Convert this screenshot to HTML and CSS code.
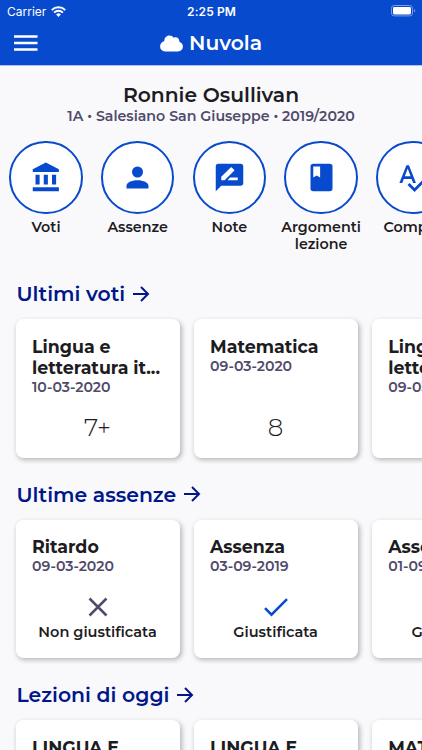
FILE: index.html
```html
<!DOCTYPE html>
<html lang="it">
<head>
    <meta charset="UTF-8">
    <meta name="viewport" content="width=device-width, initial-scale=1.0">
    <title>Nuvola</title>
    <link rel="stylesheet" href="styles.css">
</head>
<body>
    <header class="header">
        <div class="status-bar">
            <div class="carrier">
                <span class="carrier-name">Carrier</span>
                <svg class="wifi" viewBox="0 0 15 11"><path d="M.7 4.1a9.7 9.7 0 0 1 13.6 0M3.1 6.6a6.3 6.3 0 0 1 8.8 0" fill="none" stroke="#fff" stroke-width="2"/><path d="M7.5 11 5.1 8.5a3.5 3.5 0 0 1 4.8 0z" fill="#fff"/></svg>
            </div>
            <span class="time">2:25 PM</span>
            <svg class="battery" viewBox="0 0 25 12"><rect x=".5" y=".5" width="21" height="10.4" rx="2.8" fill="none" stroke="#7b9ce6"/><rect x="2" y="2" width="18" height="7.4" rx="1.4" fill="#fff"/><path d="M23 4v3.6q1.2-.5 1.2-1.8T23 4z" fill="#7b9ce6"/></svg>
        </div>
        <div class="toolbar">
            <svg class="menu-icon" viewBox="0 0 24 16"><path d="M0 1.5h23.5M0 8h23.5M0 14.5h23.5" stroke="#fff" stroke-width="2.3"/></svg>
            <div class="brand">
                <svg class="cloud" viewBox="0 0 23 17"><path d="M5 16.4a5 5 0 0 1-4.9-5C.1 8.5 1.9 6.6 4.2 6.2 4.5 2.7 6.5.5 9.2.5c2 0 3.5.9 4.4 2.3 2.7-1.3 5.7.3 5.7 3.2v.8c2.1.6 3.6 2.4 3.6 4.7 0 2.8-2.1 4.9-4.9 4.9z" fill="#fff"/></svg>
                <span class="brand-name">Nuvola</span>
            </div>
        </div>
    </header>

    <main class="content">
        <div class="student">
            <h1>Ronnie Osullivan</h1>
            <p>1A • Salesiano San Giuseppe • 2019/2020</p>
        </div>

        <nav class="shortcuts">
            <a class="shortcut">
                <span class="circle"><svg viewBox="0 0 24 24"><path d="M11.5 1 2 6v2h19V6M16 10v7h3v-7M2 22h19v-3H2M10 10v7h3v-7M4 10v7h3v-7H4z"/></svg></span>
                <span class="label">Voti</span>
            </a>
            <a class="shortcut">
                <span class="circle"><svg viewBox="0 0 24 24"><path d="M12 4a4 4 0 1 1 0 8 4 4 0 0 1 0-8m0 10c4.42 0 8 1.79 8 4v2H4v-2c0-2.21 3.58-4 8-4z"/></svg></span>
                <span class="label">Assenze</span>
            </a>
            <a class="shortcut">
                <span class="circle"><svg viewBox="0 0 24 24"><path fill-rule="evenodd" d="M20 2H4a2 2 0 0 0-2 2v18l4-4h14a2 2 0 0 0 2-2V4a2 2 0 0 0-2-2M6 14v-2.47l6.88-6.88c.2-.2.51-.2.71 0l1.77 1.77c.2.2.2.51 0 .71L8.47 14H6m12 0h-7.5l2-2H18v2z"/></svg></span>
                <span class="label">Note</span>
            </a>
            <a class="shortcut">
                <span class="circle"><svg viewBox="0 0 24 24"><path fill-rule="evenodd" d="M18 2H6a2 2 0 0 0-2 2v16a2 2 0 0 0 2 2h12a2 2 0 0 0 2-2V4a2 2 0 0 0-2-2M6 4h5v8l-2.5-1.5L6 12V4z"/></svg></span>
                <span class="label">Argomenti lezione</span>
            </a>
            <a class="shortcut">
                <span class="circle"><svg viewBox="0 0 24 24"><path fill-rule="evenodd" d="M21.59 11.59 13.5 19.68 9.83 16l-1.41 1.41 5.08 5.09L23 13M6.43 11 8.5 5.5l2.07 5.5m1.88 5h2.09L9.43 3H7.57L2.46 16h2.09l1.12-3h5.64l1.14 3z"/></svg></span>
                <span class="label">Compiti</span>
            </a>
        </nav>

        <section class="section">
            <h2><span>Ultimi voti</span> <svg class="arrow" viewBox="0 0 18 18"><path d="M1 9h15M9 2l7 7-7 7"/></svg></h2>
            <div class="cards">
                <article class="card">
                    <h3>Lingua e<br>letteratura it...</h3>
                    <time>10-03-2020</time>
                    <div class="grade">7+</div>
                </article>
                <article class="card">
                    <h3>Matematica</h3>
                    <time>09-03-2020</time>
                    <div class="grade">8</div>
                </article>
                <article class="card">
                    <h3>Lingua e<br>letteratura it...</h3>
                    <time>09-03-2020</time>
                    <div class="grade">7</div>
                </article>
            </div>
        </section>

        <section class="section">
            <h2><span>Ultime assenze</span> <svg class="arrow" viewBox="0 0 18 18"><path d="M1 9h15M9 2l7 7-7 7"/></svg></h2>
            <div class="cards">
                <article class="card">
                    <h3>Ritardo</h3>
                    <time>09-03-2020</time>
                    <div class="state">
                        <svg class="cross" viewBox="0 0 26 20"><path d="m4.5 1.5 17 17m0-17-17 17"/></svg>
                        <span>Non giustificata</span>
                    </div>
                </article>
                <article class="card">
                    <h3>Assenza</h3>
                    <time>03-09-2019</time>
                    <div class="state">
                        <svg class="check" viewBox="0 0 26 20"><path d="m2 11.2 6.5 6.5L24 2.2"/></svg>
                        <span>Giustificata</span>
                    </div>
                </article>
                <article class="card">
                    <h3>Assenza</h3>
                    <time>01-09-2019</time>
                    <div class="state">
                        <svg class="check" viewBox="0 0 26 20"><path d="m2 11.2 6.5 6.5L24 2.2"/></svg>
                        <span>Giustificata</span>
                    </div>
                </article>
            </div>
        </section>

        <section class="section">
            <h2><span>Lezioni di oggi</span> <svg class="arrow" viewBox="0 0 18 18"><path d="M1 9h15M9 2l7 7-7 7"/></svg></h2>
            <div class="cards">
                <article class="card"><h3>LINGUA E</h3></article>
                <article class="card"><h3>LINGUA E</h3></article>
                <article class="card"><h3>MATEMATICA</h3></article>
            </div>
        </section>
    </main>
</body>
</html>
```
FILE: styles.css
```css
:root {
    --primary: #084acd;
    --title: #001689;
    --text: #1d1c22;
    --muted: #504b6b;
    --background: #f9f9fc;
}

* {
    box-sizing: border-box;
}

body {
    margin: 0;
    height: 750px;
    overflow: hidden;
    background: var(--background);
    color: var(--text);
    font-family: Montserrat, Inter, sans-serif;
}

h1, h2, h3, p {
    margin: 0;
}

svg {
    display: block;
    flex: none;
}

.header {
    height: 66px;
    background: var(--primary);
    border-bottom: 1px solid #a9c3f5;
    color: #fff;
}

.status-bar {
    display: grid;
    grid-template-columns: 1fr auto 1fr;
    align-items: center;
    height: 22px;
    padding: 0 6px 0 7px;
    font-family: Inter, sans-serif;
    font-size: 12px;
}

.carrier {
    display: flex;
    align-items: center;
    gap: 5px;
}

.wifi {
    width: 15px;
    height: 11px;
}

.time {
    font-weight: 600;
    letter-spacing: 0.1px;
}

.battery {
    width: 25px;
    height: 12px;
    justify-self: end;
}

.toolbar {
    display: grid;
    grid-template-columns: 1fr auto 1fr;
    align-items: center;
    height: 42px;
    padding: 0 14px;
}

.menu-icon {
    width: 24px;
    height: 16px;
}

.brand {
    display: flex;
    align-items: center;
    gap: 6px;
}

.cloud {
    width: 23px;
    height: 17px;
}

.brand-name {
    padding-bottom: 2px;
    font-size: 20.3px;
    font-weight: 600;
}

.student {
    padding-top: 17px;
    text-align: center;
}

.student h1 {
    font-size: 20.3px;
    font-weight: 600;
    line-height: 24px;
}

.student p {
    color: var(--muted);
    font-size: 14.2px;
    font-weight: 600;
    line-height: 18px;
}

.shortcuts {
    display: flex;
    gap: 7.7px;
    height: 152px;
    padding: 15.5px 0 0 4px;
}

.shortcut {
    display: flex;
    flex: 0 0 84px;
    flex-direction: column;
    align-items: center;
}

.circle {
    display: flex;
    align-items: center;
    justify-content: center;
    width: 73.5px;
    height: 73.5px;
    border: 2px solid var(--primary);
    border-radius: 50%;
    background: #fff;
}

.circle svg {
    width: 33px;
    height: 33px;
    fill: var(--primary);
}

.label {
    margin-top: 4.5px;
    font-size: 14.3px;
    font-weight: 600;
    line-height: 17px;
    text-align: center;
}

.section {
    height: 200.5px;
    padding-left: 15.5px;
}

.section h2 {
    display: flex;
    align-items: center;
    gap: 7px;
    height: 33px;
    padding-left: 1px;
    color: var(--title);
    font-size: 20.4px;
    font-weight: 600;
}

.arrow {
    width: 18px;
    height: 18px;
    fill: none;
    stroke: var(--title);
    stroke-width: 2;
}

.cards {
    display: flex;
    gap: 13.6px;
    padding-top: 9px;
}

.card {
    display: flex;
    flex: 0 0 164.5px;
    flex-direction: column;
    height: 138.5px;
    padding: 16.5px 17px 16px 16.5px;
    border-radius: 7.5px;
    background: #fff;
    box-shadow: 1.5px 2px 5px rgba(0, 0, 0, 0.27);
}

.card h3 {
    font-size: 17.4px;
    font-weight: 700;
    line-height: 21px;
    white-space: nowrap;
}

.card time {
    color: var(--muted);
    font-size: 14.1px;
    font-weight: 600;
    line-height: 18px;
}

.grade {
    margin-top: auto;
    font-size: 24.5px;
    font-weight: 300;
    line-height: 30px;
    text-align: center;
}

.state {
    display: flex;
    flex-direction: column;
    align-items: center;
    gap: 6px;
    margin-top: auto;
    font-size: 14.5px;
    font-weight: 600;
    line-height: 19px;
    white-space: nowrap;
}

.cross, .check {
    width: 26px;
    height: 20px;
    fill: none;
    stroke: var(--muted);
    stroke-width: 2.5;
}

.check {
    stroke: var(--primary);
}
```
